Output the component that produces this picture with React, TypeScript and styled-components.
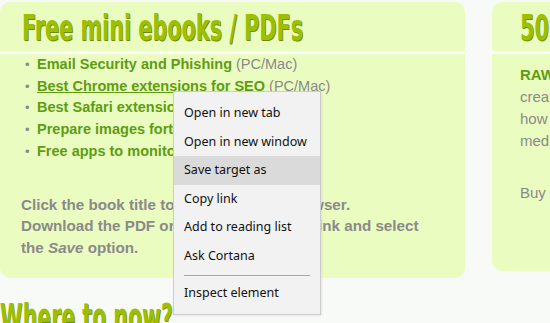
import React, { FC } from 'react';
import styled, { createGlobalStyle } from 'styled-components';

const GREEN = '#9cbf00';
const LINK = '#5f9c12';
const GREY = '#8a8a8a';
const CARD = '#eafcc0';

const GlobalStyle = createGlobalStyle`
  html, body {
    margin: 0;
    padding: 0;
    background: #f8faf7;
    overflow: hidden;
  }
  body {
    font-family: 'Liberation Sans', Arial, sans-serif;
  }
`;

const Page = styled.div`
  position: relative;
  width: 550px;
  height: 323px;
  overflow: hidden;
`;

const Row = styled.div`
  display: flex;
  gap: 27px;
  padding-top: 2px;
  align-items: flex-start;
`;

const Card = styled.section<{ $width: number; $height: number }>`
  flex: 0 0 ${(p) => p.$width}px;
  height: ${(p) => p.$height}px;
  background: ${CARD};
  border-radius: 10px;
  overflow: hidden;
`;

const CardHeader = styled.div<{ $inset: number }>`
  height: 49px;
  border-bottom: 3px solid #ffffff;
  padding-left: ${(p) => p.$inset}px;
  display: flex;
  align-items: center;
`;

const HeaderText = styled.h2`
  margin: 2px 0 0;
  display: inline-block;
  white-space: nowrap;
  font-family: 'DejaVu Sans Condensed', 'DejaVu Sans', sans-serif;
  font-weight: bold;
  font-size: 35px;
  line-height: 40px;
  color: ${GREEN};
  text-shadow: 1px 1px 0 #6f8a00;
  transform: scaleX(0.66);
  transform-origin: left center;
`;

const CardBody = styled.div`
  padding: 0 0 0 21px;
`;

const List = styled.ul`
  margin: 0;
  padding: 0;
  list-style: none;
`;

const Item = styled.li`
  position: relative;
  padding-left: 16px;
  font-size: 14.5px;
  line-height: 21.7px;
  font-weight: bold;
  color: ${LINK};
  white-space: nowrap;

  &::before {
    content: '•';
    position: absolute;
    left: 4px;
    top: 0;
    color: ${GREY};
    font-weight: normal;
    font-size: 13px;
  }
`;

const Link = styled.a`
  color: ${LINK};
  text-decoration: underline;
`;

const Platform = styled.span`
  color: ${GREY};
  font-weight: normal;
`;

const Note = styled.p`
  margin: 31px 0 0;
  font-size: 15.2px;
  line-height: 21.5px;
  font-weight: bold;
  color: ${GREY};
  white-space: nowrap;

  em {
    font-weight: bold;
  }
`;

const SideBody = styled.div`
  padding: 10px 0 0 28px;
  font-size: 15px;
  line-height: 22px;
  color: ${GREY};
  white-space: nowrap;
`;

const Strong = styled.div`
  font-weight: bold;
  color: ${LINK};
`;

const Gap = styled.div`
  height: 30px;
`;

const Where = styled.h2`
  margin: 19px 0 0;
  display: inline-block;
  white-space: nowrap;
  font-family: 'DejaVu Sans Condensed', 'DejaVu Sans', sans-serif;
  font-weight: bold;
  font-size: 38px;
  line-height: 40px;
  color: ${GREEN};
  text-shadow: 1px 1px 0 #6f8a00;
  transform: scaleX(0.6);
  transform-origin: left center;
`;

const Menu = styled.div`
  position: absolute;
  left: 173px;
  top: 91px;
  width: 146px;
  padding: 7px 0;
  background: #f2f2f2;
  border: 1px solid #cccccc;
  box-shadow: 1px 1px 2px rgba(0, 0, 0, 0.08);
  font-family: 'Noto Sans', 'Open Sans', sans-serif;
  font-size: 12.5px;
  color: #111111;
`;

const MenuItem = styled.div<{ $active?: boolean }>`
  height: 28.6px;
  line-height: 28.6px;
  padding-left: 10px;
  white-space: nowrap;
  background: ${(p) => (p.$active ? '#dadada' : 'transparent')};
`;

const Separator = styled.div`
  height: 1px;
  margin: 4px 10px 3px 10px;
  background: #a8a8a8;
`;

const menuItems = [
  'Open in new tab',
  'Open in new window',
  'Save target as',
  'Copy link',
  'Add to reading list',
  'Ask Cortana',
];

const ContextMenu: FC = () => (
  <Menu>
    {menuItems.map((label) => (
      <MenuItem key={label} $active={label === 'Save target as'}>
        {label}
      </MenuItem>
    ))}
    <Separator />
    <MenuItem>Inspect element</MenuItem>
  </Menu>
);

const books = [
  { title: 'Email Security and Phishing', os: '(PC/Mac)' },
  { title: 'Best Chrome extensions for SEO', os: '(PC/Mac)', link: true },
  { title: 'Best Safari extensions for SEO', os: '(Mac)' },
  { title: 'Prepare images fort the web faster', os: '(Mac)' },
  { title: 'Free apps to monitor your Mac', os: '(Mac)' },
];

const App: FC = () => (
  <Page>
    <GlobalStyle />
    <Row>
      <Card $width={465} $height={276}>
        <CardHeader $inset={22}>
          <HeaderText>Free mini ebooks / PDFs</HeaderText>
        </CardHeader>
        <CardBody>
          <List>
            {books.map((b) => (
              <Item key={b.title}>
                {b.link ? <Link href="#">{b.title}</Link> : b.title}{' '}
                <Platform>{b.os}</Platform>
              </Item>
            ))}
          </List>
          <Note>
            Click the book title to open it in your browser.
            <br />
            Download the PDF or just right-click the link and select
            <br />
            the <em>Save</em> option.
          </Note>
        </CardBody>
      </Card>
      <Card $width={200} $height={269}>
        <CardHeader $inset={28}>
          <HeaderText>500px</HeaderText>
        </CardHeader>
        <SideBody>
          <Strong>RAW photos</Strong>
          <div>creative</div>
          <div>how to</div>
          <div>media</div>
          <Gap />
          <div>Buy now</div>
        </SideBody>
      </Card>
    </Row>
    <Where>Where to now?</Where>
    <ContextMenu />
  </Page>
);

export default App;
